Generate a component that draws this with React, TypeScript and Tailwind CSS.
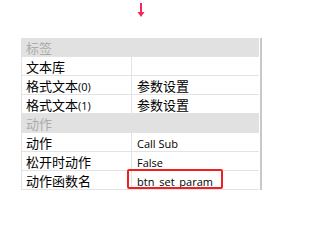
const cjk = "font-['Noto_Sans_CJK_SC','Liberation_Sans',sans-serif]";
const latin = "font-['Open_Sans','Noto_Sans_CJK_SC',sans-serif] text-[11px]";

type Row =
  | { group: string }
  | { name: React.ReactNode; value?: string; highlight?: boolean };

const rows: Row[] = [
  { group: "标签" },
  { name: "文本库" },
  { name: <>格式文本<span className={latin}>(0)</span></>, value: "参数设置" },
  { name: <>格式文本<span className={latin}>(1)</span></>, value: "参数设置" },
  { group: "动作" },
  { name: "动作", value: "Call Sub" },
  { name: "松开时动作", value: "False" },
  { name: "动作函数名", value: "btn_set_param", highlight: true },
];

function Value({ text }: { text?: string }) {
  if (!text) return null;
  const isCjk = /[\u4e00-\u9fff]/.test(text);
  return <span className={isCjk ? "" : latin}>{text}</span>;
}

export default function App() {
  return (
    <div className={`h-[205px] w-[273px] bg-white ${cjk} text-[13px] text-black`}>
      <div className="flex h-[38px] justify-center pl-[8px] pt-[3px]">
        <svg width="8" height="15" viewBox="0 0 8 15">
          <path d="M4 0 V11" stroke="#ee2a5a" strokeWidth="2" />
          <path d="M0.5 9 L4 14 L7.5 9 Z" fill="#ee2a5a" />
        </svg>
      </div>
      <div className="ml-[21px] flex w-[241px]">
        <div className="w-[238px] border-l border-[#e3e3e3]">
          {rows.map((r, i) =>
            "group" in r ? (
              <div
                key={i}
                className="h-[19px] border-b border-[#e3e3e3] bg-[#e1e1e1] pl-[4px] leading-[19px] text-[#ababab]"
              >
                {r.group}
              </div>
            ) : (
              <div key={i} className="grid h-[19px] grid-cols-[110px_1fr] border-b border-[#e3e3e3] leading-[19px]">
                <div className="truncate border-r border-[#e3e3e3] pl-[4px]">{r.name}</div>
                <div className="relative pl-[5px]">
                  <Value text={r.value} />
                  {r.highlight && (
                    <div className="absolute left-[-5px] top-[-2px] h-[20px] w-[96px] rounded-[2px] border-2 border-[#f02020]" />
                  )}
                </div>
              </div>
            )
          )}
        </div>
        <div className="ml-[1px] w-[2px] bg-[#c8c8c8]" />
      </div>
    </div>
  );
}
